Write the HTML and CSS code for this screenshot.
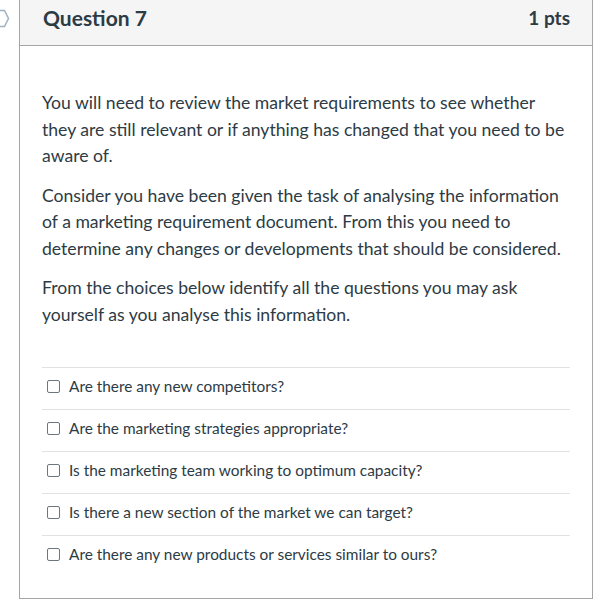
FILE: index.html
```html
<!DOCTYPE html>
<html>
<head>
<meta charset="utf-8">
<link rel="stylesheet" href="styles.css">
</head>
<body>
<div class="page">
  <svg class="flag" width="10" height="20" viewBox="0 0 10 20"><path d="M-2 1.5 H4.5 L8.5 9.5 L4.5 17.5 H-2" fill="none" stroke="#9fb2c2" stroke-width="1.5"/></svg>
  <div class="card">
    <div class="header">
      <h2 class="title">Question 7</h2>
      <span class="pts">1 pts</span>
    </div>
    <div class="body">
      <p>You will need to review the market requirements to see whether they are still relevant or if anything has changed that you need to be aware of.</p>
      <p>Consider you have been given the task of analysing the information of a marketing requirement document. From this you need to determine any changes or developments that should be considered.</p>
      <p>From the choices below identify all the questions you may ask yourself as you analyse this information.</p>
      <div class="answers">
        <label class="answer"><span class="box"></span><span>Are there any new competitors?</span></label>
        <label class="answer"><span class="box"></span><span>Are the marketing strategies appropriate?</span></label>
        <label class="answer"><span class="box"></span><span>Is the marketing team working to optimum capacity?</span></label>
        <label class="answer"><span class="box"></span><span>Is there a new section of the market we can target?</span></label>
        <label class="answer"><span class="box"></span><span>Are there any new products or services similar to ours?</span></label>
      </div>
    </div>
  </div>
</div>
</body>
</html>
```
FILE: styles.css
```css
html, body {
  margin: 0;
  padding: 0;
  background: #ffffff;
}
body {
  font-family: Lato, "Noto Sans", sans-serif;
  color: #2d3b45;
}
.page {
  position: relative;
  padding-left: 19px;
  width: 574px;
}
.flag {
  position: absolute;
  left: 0;
  top: 9px;
}
.card {
  border: 1px solid #a5a5a5;
  border-top: none;
}
.header {
  height: 45px;
  background: #f5f5f5;
  border-bottom: 1px solid #a5a5a5;
  display: flex;
  align-items: center;
  justify-content: space-between;
  padding: 0 22px 0 23px;
}
.title {
  margin: 0;
  font-size: 21px;
  font-weight: 700;
  color: #2d3b45;
  position: relative;
  top: -5px;
}
.pts {
  font-size: 19px;
  font-weight: 700;
  color: #2d3b45;
  position: relative;
  top: -5px;
}
.body {
  padding: 44px 22px 21px 22px;
}
.body p {
  margin: 0 0 13px 0;
  font-size: 17.6px;
  line-height: 26.5px;
}
.answers {
  margin-top: 39px;
}
.answer {
  display: flex;
  align-items: center;
  height: 36px;
  padding-bottom: 5px;
  border-top: 1px solid #dfe1e3;
  font-size: 15.4px;
  color: #2d3b45;
}
.box {
  width: 11px;
  height: 11px;
  border: 1px solid #6b7780;
  border-radius: 2px;
  margin: 0 9px 0 5px;
  flex: none;
}
```
